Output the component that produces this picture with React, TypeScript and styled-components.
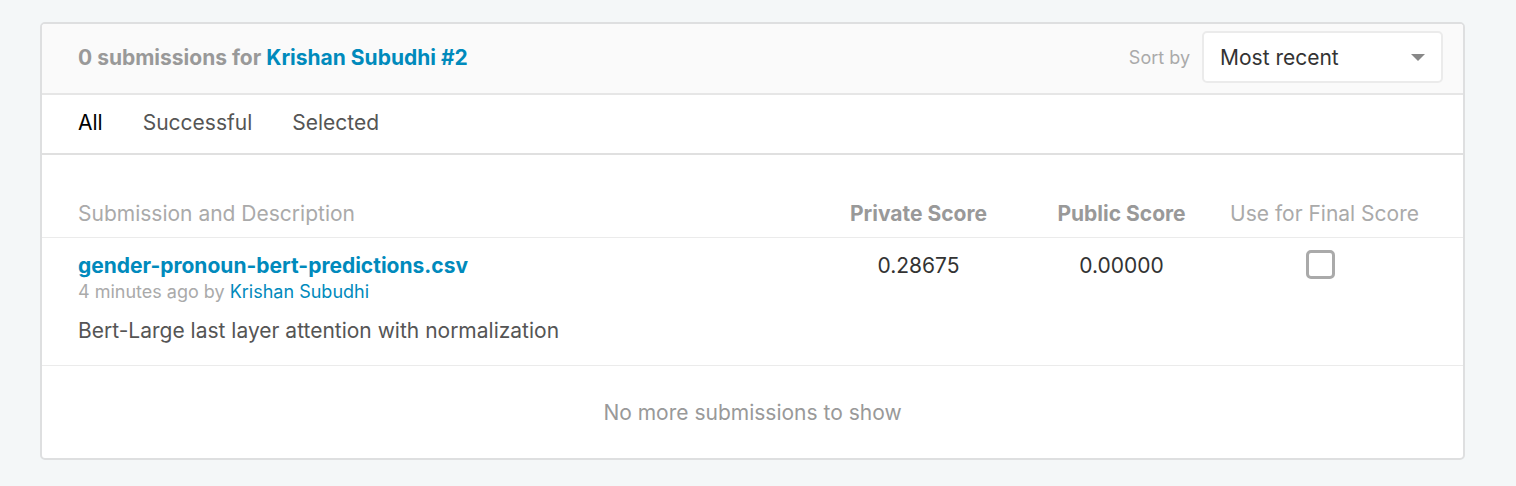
import styled, { createGlobalStyle } from "styled-components"

const GlobalStyle = createGlobalStyle`
  body {
    margin: 0;
    background: #f4f7f8;
    font-family: Inter, Roboto, "Liberation Sans", sans-serif;
  }
`

const Card = styled.div`
  box-sizing: border-box;
  width: 1425px;
  margin: 22px 0 0 40px;
  background: #fff;
  border: 2px solid #dedfe0;
  border-radius: 5px;
  overflow: hidden;
`

const Header = styled.div`
  display: flex;
  align-items: center;
  justify-content: space-between;
  height: 69px;
  padding: 0 20px 0 36px;
  background: #fafafa;
  border-bottom: 2px solid #e6e6e6;
`

const Title = styled.div`
  margin-top: -3px;
  font-size: 21px;
  font-weight: 700;
  color: #999;
`

const Blue = styled.a<{ $bold?: boolean }>`
  color: #008abc;
  text-decoration: none;
  font-weight: ${p => (p.$bold ? 700 : 400)};
`

const SortWrap = styled.div`
  display: flex;
  align-items: center;
  gap: 12px;
  margin-top: -3px;
`

const SortLabel = styled.span`
  font-size: 18px;
  color: #aaa;
`

const Select = styled.div`
  box-sizing: border-box;
  display: flex;
  align-items: center;
  justify-content: space-between;
  width: 241px;
  height: 52px;
  padding: 0 16px 0 16px;
  background: #fff;
  border: 2px solid #ebebeb;
  border-radius: 5px;
  font-size: 21px;
  color: #333;
`

const Caret = styled.span`
  width: 0;
  height: 0;
  border-left: 7px solid transparent;
  border-right: 7px solid transparent;
  border-top: 7px solid #888;
`

const Tabs = styled.div`
  box-sizing: border-box;
  display: flex;
  align-items: center;
  gap: 40px;
  height: 60px;
  padding: 0 36px 4px;
  border-bottom: 2px solid #e0e0e0;
`

const Tab = styled.span<{ $active?: boolean }>`
  font-size: 21px;
  color: ${p => (p.$active ? "#000" : "#555")};
`

const Grid = styled.div`
  display: grid;
  grid-template-columns: 1fr 203px 203px 203px;
  padding: 0 37px 0 36px;
`

const HeadRow = styled(Grid)`
  align-items: center;
  padding-top: 34px;
  height: 48px;
  border-bottom: 1px solid #ebebeb;
`

const HeadCell = styled.div<{ $bold?: boolean; $center?: boolean }>`
  font-size: 21px;
  font-weight: ${p => (p.$bold ? 700 : 400)};
  color: ${p => (p.$bold ? "#999" : "#aaa")};
  text-align: ${p => (p.$center ? "center" : "left")};
`

const Row = styled(Grid)`
  padding-top: 15px;
  height: 112px;
  border-bottom: 1px solid #ebebeb;
`

const FileName = styled(Blue)`
  display: block;
  font-size: 21px;
  line-height: 26px;
`

const Meta = styled.div`
  font-size: 18px;
  line-height: 26px;
  color: #aaa;
`

const Desc = styled.div`
  margin-top: 13px;
  font-size: 21px;
  color: #555;
`

const Score = styled.div`
  font-size: 21px;
  line-height: 26px;
  color: #333;
  text-align: center;
`

const CheckCell = styled.div`
  display: flex;
  justify-content: center;
  padding-right: 8px;
`

const Checkbox = styled.span`
  box-sizing: border-box;
  width: 29px;
  height: 29px;
  margin-top: -3px;
  border: 3px solid #aaa;
  border-radius: 5px;
`

const Footer = styled.div`
  height: 92px;
  display: flex;
  align-items: center;
  justify-content: center;
  font-size: 21px;
  color: #999;
`

export default function App() {
  return (
    <>
      <GlobalStyle />
      <Card>
        <Header>
          <Title>
            0 submissions for <Blue $bold>Krishan Subudhi #2</Blue>
          </Title>
          <SortWrap>
            <SortLabel>Sort by</SortLabel>
            <Select>
              Most recent
              <Caret />
            </Select>
          </SortWrap>
        </Header>
        <Tabs>
          <Tab $active>All</Tab>
          <Tab>Successful</Tab>
          <Tab>Selected</Tab>
        </Tabs>
        <HeadRow>
          <HeadCell>Submission and Description</HeadCell>
          <HeadCell $bold $center>Private Score</HeadCell>
          <HeadCell $bold $center>Public Score</HeadCell>
          <HeadCell $center>Use for Final Score</HeadCell>
        </HeadRow>
        <Row>
          <div>
            <FileName $bold>gender-pronoun-bert-predictions.csv</FileName>
            <Meta>
              4 minutes ago by <Blue>Krishan Subudhi</Blue>
            </Meta>
            <Desc>Bert-Large last layer attention with normalization</Desc>
          </div>
          <Score>0.28675</Score>
          <Score>0.00000</Score>
          <CheckCell>
            <Checkbox />
          </CheckCell>
        </Row>
        <Footer>No more submissions to show</Footer>
      </Card>
    </>
  )
}
